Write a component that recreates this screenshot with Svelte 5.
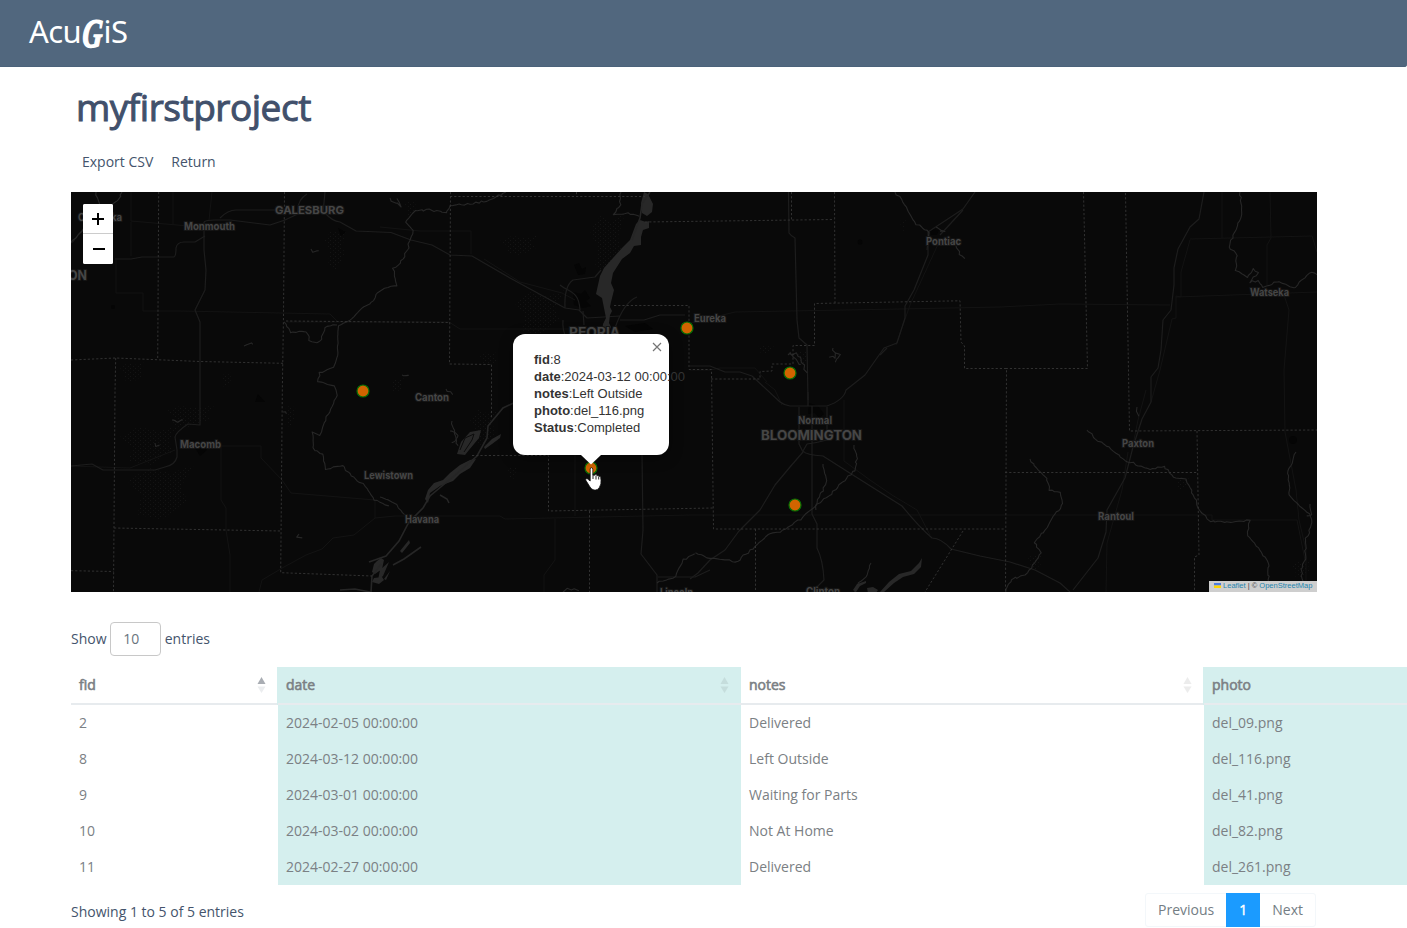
<script>
  const rows = [
    { fid: 2, date: '2024-02-05 00:00:00', notes: 'Delivered', photo: 'del_09.png' },
    { fid: 8, date: '2024-03-12 00:00:00', notes: 'Left Outside', photo: 'del_116.png' },
    { fid: 9, date: '2024-03-01 00:00:00', notes: 'Waiting for Parts', photo: 'del_41.png' },
    { fid: 10, date: '2024-03-02 00:00:00', notes: 'Not At Home', photo: 'del_82.png' },
    { fid: 11, date: '2024-02-27 00:00:00', notes: 'Delivered', photo: 'del_261.png' }
  ];
  const columns = ['fid', 'date', 'notes', 'photo'];
  const popup = [
    ['fid', '8'],
    ['date', '2024-03-12 00:00:00'],
    ['notes', 'Left Outside'],
    ['photo', 'del_116.png'],
    ['Status', 'Completed']
  ];
  const markers = [[363, 391], [687, 328], [790, 373], [795, 505], [591, 468]];

  const borders = [
    'M158.7 192L157.7 359', 'M284.5 192L283.5 316L282.3 392L280.7 572.7L372 576',
    'M71 360L115.7 358L200 361.5L283 363.3', 'M115.7 358L115 392L113.5 592', 'M114 528L281 531',
    'M71 570.7L113.5 571.5', 'M286 321L450 322.5', 'M450.5 192L449.5 364L491.5 364.5V418',
    'M450 196.5H645M576.5 192V197', 'M645 222L834 219.5', 'M614 305.5H689V369.5H711.5L713.5 529H1005',
    'M791.5 192V220M834.5 192L835 303', 'M711 379H760V371.5L772 371V364H793V345.5H814.5V303.5L960 300.8L961 342L964.5 346V368.5H1006.5L1005.5 592',
    'M472 455.5H548.5V511L713 508', 'M589.5 511V592', 'M755.5 529V592', 'M963 531L925 592',
    'M1083.5 192L1087.5 368.5H1006', 'M1125.5 193L1129.5 431L1317 430', 'M1197 431L1199 555L1194.5 557V592', 'M1005 472.5H1197'
  ];
  const roads = [
    'M71 243C76 241 78 229 90 226M115 259H131L142 257H174Q176 256 176 248Q177 242 184 242H195L205 236',
    'M204 222Q206 220 215 220H230L270 225L285 220L302 212M325 213Q332 221 340 222L356 231L391 232.5L411 240L432 245L450 255L472 256L510 278L565 308L579 310L587 318L620 316',
    'M204 222L204 250L206 270L205 290L195 310L200 322V425L188 424Q176 432 175 437L177 450V457Q175 465 165 467L155 470H103L92 464L71 466',
    'M298 212Q297 200 307 194M325 192L323 213M220 218Q228 210 236 210H285',
    'M580 310C579 290 568 292 560 285M565 308Q564 286 573 280L595 277L601 270M563 320Q562 330 567 340M583 311L584 325M620 320H644L660 315H685M615 328Q624 302 637 297',
    'M788.5 192L789 233Q791 236 795 238L797 320L799 338L807 345L808 400M690 366H710L725 372H740L752 376L780 402Q784 405 790 406H827Q844 400 846 390L865 375L884 348L897 343L905 318V306L914 290L922 270L928 255V232L963 209L975 192',
    'M929 232L927 250M880 355L887 348M940 235L963 210',
    'M799 407V444L803 452L790 467L775 485L760 510L739 531L725 550L710 560L698 573L690 579',
    'M812 406V514L817 524V548Q823 560 824 580L812 592M808 406V392M827 407V440Q816 443 807 444L803 451Q806 455 823 456L845 470L902 506Q920 528 932 538Q941 538 951 549L980 556L1010 562L1035 570L1060 583L1070 592',
    'M1204 192L1199 219L1190 227L1178 249L1174 268V285L1171 310L1163 320L1161 350L1158 368L1151 377L1151 402L1142 419L1133 447L1125 478L1107 510L1106 532L1098 558L1073 590',
    'M642 455L643 530L641 554L657 575V592M658 577H695L710 570'
  ];
  const lanes = [
    'M131 192V221L200 227M131 222V256M173 192V225M116 260V293H126L143 293V311H180L330 314L337 321M287 322H449L460 329H570',
    'M380 227L420 231H471V254M484 259L520 282L562 293L575 300M212 192L209 220',
    'M221 446V500L226 508V530L230 555V592M217 446H261V458L282 480L291 493L375 500V518L354 535L333 538L322 549L306 555L284 567L262 580L259 592',
    'M71 466L130 468L175 450M375 518L395 516H500L505 519L690 515H1212V520H1297L1305 560M555 519V560L544 575V592',
    'M1000 307L900 309L735 312L690 323M1000 307L1060 304L1170 305M575 455L575 516M844 400V461L870 480L892 495L917 510L930 535',
    'M1190 239L1312 236L1317 252M1222 192V238M1270 192L1271 238L1267 245V285M1190 240L1181 272V297L1176 296V318L1172 319L1160 370L1151 402M1176 297L1317 292M1284 295L1289 310L1284 370L1285 432L1296 490L1299 520L1306 550V592',
    'M1128 452L1122 490L1107 543L1106 592M1146 390L1138 420L1132 450M940 240L910 305L896 345M765 382L775 390L782 405M690 370H710L720 368H755L767 382'
  ];

  // Wobbles each segment so that waterways meander between their survey points.
  function meander(points, amp = 1.6) {
    let seed = points[0][0] * 13 + points[0][1];
    const rnd = () => ((seed = (seed * 16807 + 11) % 2147483647) / 2147483647) - 0.5;
    let d = `M${points[0][0]} ${points[0][1]}`;
    for (let i = 1; i < points.length; i++) {
      const [x0, y0] = points[i - 1];
      const [x1, y1] = points[i];
      const n = Math.max(1, Math.round(Math.hypot(x1 - x0, y1 - y0) / 3));
      for (let k = 1; k <= n; k++) {
        const t = k / n;
        d += `L${(x0 + (x1 - x0) * t + rnd() * amp * 2).toFixed(1)} ${(y0 + (y1 - y0) * t + rnd() * amp * 2).toFixed(1)}`;
      }
    }
    return d;
  }
  const rivers = [
    [[96, 192], [99, 205], [98, 215], [86, 226], [78, 236], [71, 243]],
    [[122, 192], [119, 199], [112, 204]],
    [[506, 192], [490, 200], [470, 204], [450, 205], [446, 213], [430, 210], [415, 211], [405, 222], [414, 230], [407, 250], [400, 264], [393, 269], [397, 285], [382, 289], [371, 302], [360, 310], [350, 320], [338, 325], [337, 355], [333, 368], [320, 373], [318, 382], [334, 386], [337, 395], [325, 420], [320, 435], [313, 432], [313, 448], [322, 455], [326, 470], [342, 465], [352, 476], [365, 486], [375, 500], [388, 505]],
    [[337, 325], [325, 328], [320, 342], [311, 342], [306, 332], [290, 332], [285, 322]],
    [[895, 192], [905, 205], [914, 222], [925, 229], [931, 238]],
    [[956, 246], [960, 254], [965, 258]],
    [[621, 192], [620, 205], [614, 214], [628, 213], [640, 217]],
    [[854, 445], [857, 456], [855, 470], [842, 482], [831, 494], [820, 502], [813, 509], [800, 519], [785, 530], [768, 535], [755, 547], [743, 556], [738, 562], [710, 558], [695, 553]],
    [[823, 464], [827, 478], [823, 490], [817, 500], [816, 509]],
    [[1030, 459], [1038, 471], [1047, 478], [1049, 490], [1060, 493], [1063, 503], [1053, 517], [1046, 530], [1034, 542], [1041, 553], [1033, 565], [1025, 575], [1012, 579], [1005, 591]],
    [[1087, 430], [1098, 441], [1112, 449], [1125, 460], [1135, 464], [1150, 470], [1164, 466], [1173, 477], [1185, 480], [1194, 495], [1200, 512], [1210, 521], [1230, 522], [1250, 520], [1247, 535], [1260, 550], [1268, 563], [1269, 580], [1264, 592]],
    [[1296, 452], [1288, 470], [1290, 495], [1302, 508], [1310, 514], [1312, 525], [1305, 540], [1306, 560], [1301, 570], [1304, 592]],
    [[1310, 504], [1312, 514], [1306, 516]],
    [[1240, 192], [1242, 215], [1235, 232], [1229, 247], [1237, 255], [1236, 270], [1247, 277], [1254, 269], [1258, 273], [1250, 282], [1259, 281], [1263, 288], [1277, 281], [1296, 288], [1302, 280], [1309, 273], [1317, 274]],
    [[380, 497], [394, 503], [404, 514]],
    [[563, 592], [568, 589], [578, 590]],
    [[657, 583], [675, 577], [684, 560], [695, 553]],
    [[871, 563], [867, 577], [858, 582], [855, 592]]
  ];
  const smallWater = [
    [[788, 355], [796, 353], [801, 360], [806, 372]], [[790, 352], [797, 362], [801, 365]],
    [[833, 348], [835, 357], [829, 357]], [[835, 353], [841, 355], [835, 362]],
    [[244, 346], [248, 344], [254, 343]], [[311, 249], [314, 252], [319, 251]], [[172, 420], [178, 421], [184, 420]],
    [[452, 421], [455, 434], [457, 446]], [[450, 431], [459, 434], [453, 444]], [[390, 198], [400, 206], [398, 199]],
    [[936, 227], [945, 231], [939, 233]], [[1137, 407], [1138, 414], [1139, 417]], [[446, 389], [451, 392], [454, 395]], [[402, 375], [408, 375], [405, 377]],
    [[155, 443], [157, 447], [159, 446]], [[283, 412], [287, 413], [286, 415]], [[299, 534], [298, 537], [301, 538]]
  ];
  const stipple = [
    [120, 425, 60, 40], [128, 465, 66, 55], [165, 405, 50, 22], [120, 362, 26, 20], [284, 405, 12, 22], [325, 228, 22, 42], [590, 213, 35, 60],
    [500, 235, 40, 20], [515, 290, 50, 45], [405, 200, 12, 16], [470, 408, 28, 38], [480, 352, 18, 14], [390, 378, 14, 14], [757, 345, 18, 8], [798, 350, 10, 16],
    [1175, 478, 14, 12], [1292, 560, 20, 18], [900, 218, 6, 14], [508, 466, 9, 14], [1028, 554, 14, 16], [222, 372, 10, 16]
  ];
  const labels = [
    ['Monmouth', 184, 230, 51, 10.5], ['GALESBURG', 275, 214, 69, 11], ['PEORIA', 569, 336.5, 51, 12.5], ['Eureka', 694, 322, 32, 9.8],
    ['Pontiac', 926, 245, 35, 10], ['Watseka', 1250, 296, 39, 10], ['Canton', 415, 401, 34, 10], ['Macomb', 180, 448, 41, 10.5],
    ['Lewistown', 364, 479, 49, 10], ['Havana', 405, 523, 34, 10], ['Normal', 798, 424, 34, 10], ['BLOOMINGTON', 761, 439.5, 101, 12.8],
    ['Paxton', 1122, 447, 32, 10], ['Rantoul', 1098, 520, 36, 10], ['Clinton', 806, 595, 34, 10], ['Lincoln', 660, 596, 33, 10],
    ['Oquawka', 78, 221, 44, 10], ['ON', 68, 280, 19, 13]
  ];
</script>

<div class="page">
  <header class="navbar">
    <div class="logo"><span>Acu</span><span class="script">G</span><span>iS</span></div>
  </header>

  <main>
    <h1>myfirstproject</h1>
    <nav class="actions"><a href="#export">Export CSV</a><a href="#return">Return</a></nav>

    <section class="map">
      <svg class="tiles" viewBox="71 192 1246 400" width="1246" height="400">
        <defs>
          <pattern id="dots" width="5" height="4" patternUnits="userSpaceOnUse">
            <rect x="0" y="0" width="1" height="1" fill="#141414" /><rect x="3" y="2" width="1" height="1" fill="#121212" />
          </pattern>
        </defs>
        <rect x="71" y="192" width="1246" height="400" fill="#090909" />
        {#each stipple as [x, y, w, h]}
          <path d={`M${x} ${y + h * 0.3}l${w * 0.3} ${-h * 0.25}l${w * 0.35} ${h * 0.1}l${w * 0.35} ${-h * 0.15}l${-w * 0.2} ${h * 0.4}l${w * 0.1} ${h * 0.25}l${-w * 0.4} ${h * 0.35}l${-w * 0.35} ${-h * 0.1}l${w * 0.05} ${-h * 0.35}z`} fill="url(#dots)" />
        {/each}
        <g fill="#050505">
          <path d="M574 265l5-2 3 6 4-2-1 7-7 1zM573 292l8 2 4-4 5 8-4 3 5 5-8 2-9-3zM809 403l9 3 6 8-5 4-4-5-7 1zM190 440l20 3-4 8-6 5zM338 228l8 4-5 4zM258 394l7 8-10 0zM625 326l20-3 8 6-18 3zM930 229l9 1-2 5-6 0z" />
          <circle cx="860" cy="242" r="2.5" /><circle cx="1293" cy="440" r="4" /><circle cx="113" cy="307" r="2" />
        </g>
        <g fill="none" stroke="#131313" stroke-width="1">
          {#each lanes as d}<path {d} />{/each}
        </g>
        <g fill="none" stroke="#1d1d1d" stroke-width="1.2" stroke-linejoin="round">
          {#each roads as d}<path {d} />{/each}
        </g>
        <g fill="none" stroke="#272727" stroke-width="1.1" stroke-linejoin="round">
          {#each rivers as r}<path d={meander(r, 1)} />{/each}
          {#each smallWater as r}<path d={meander(r, 1.4)} />{/each}
        </g>
        <g fill="#282828">
          <path d="M644 192l4 2 5 10-1 8-5 4-5-3-1-10zM640 220l6 2 3-1v7l-6 2-2 7 0 8-7 1-4 7-8 6-9 14-2 10 3 7-3 12-1 5 2 4-2 4-1 8 2 4-3 6-6-1 1-8 3-6-4-20-6-4 4-18 4-8 18-20 8-8 6-16z" />
          <path d="M470 432l11-2-2 8-10 12-4 5-8-1 4-12zM484 447l8-8 9-5-1 4-8 6-7 5z" />
          <path d="M476 459l-6 9-10 6-7 7-13 5-10 7-2 10-3-4 3-9 6-7 9-3 7-7 10-8 10-5z" />
          <path d="M409 540l1 3-8 10-2-2zM377 561l4-3 3 2-2 9-7 5-3-2 2-8zM389 562l-6 14-5 4 2-10zM374 578l8-1 2 3-5 4-7-2zM390 571l-4 9-2-1z" />
          <path d="M922 558l-3 5-8 8-12 3-10 8-9 10h4l10-9 9-6 11-3 7-7zM867 588l6-1 5 3-2 3h-8zM853 590l4-6 9-3v2l-6 3-4 6z" />
        </g>
        <g fill="none" stroke="#262626" stroke-width="1.6">
          <path d="M650 192l-8 12-2 14-8 22M518 401l-15 7-15 18-1 12-10 18-23 20-24 20-7 12-14 14-10 19-13 15-17 6M421 547l-17 12-11 6M340 590l15-1 15 3M440 495l7 4 2 4M371 592l1-16 9-12" />
        </g>
        <path d="M460 450l5-12 9-4M464 452l8-12 2-6" fill="none" stroke="#0c0c0c" />
        <g fill="none" stroke="#313131" stroke-width="1" stroke-dasharray="2.2 2">
          {#each borders as d}<path {d} />{/each}
        </g>
        <g class="places">
          {#each labels as [name, x, y, w, size]}
            <text {x} {y} textLength={w} lengthAdjust="spacingAndGlyphs" font-size={size}>{name}</text>
          {/each}
        </g>
        {#each markers as [cx, cy]}
          <circle {cx} {cy} r="6" fill="#d16400" stroke="#087005" stroke-width="1.2" />
        {/each}
      </svg>

      <div class="zoom"><button aria-label="Zoom in"><svg width="30" height="29"><path d="M9 15h12M15 9v12" /></svg></button><button aria-label="Zoom out"><svg width="30" height="30"><path d="M10 15h12" /></svg></button></div>

      <div class="popup">
        {#each popup as [key, value]}
          <div><b>{key}</b>:{value}</div>
        {/each}
        <svg class="close" width="10" height="10"><path d="M1 1l8 8M9 1l-8 8" /></svg>
        <svg class="tip" width="20" height="10"><path d="M0 0h20l-10 9.5z" /></svg>
      </div>

      <svg class="cursor" width="18" height="24" viewBox="0 0 18 24">
        <path d="M5.2 2.2Q5.2.7 6.4.7T7.8 2.2V8l1.8.3Q10 7 11 7.3q1 .2 1.1 1.5 1-.7 2 .5 1.200-.4 1.600 1.100.6 2.600.2 6.500l-1.500 3.500Q13 23 10.500 23H9Q6.500 22.600 5 20L1 13.600q-.9-1.500.3-1.800 1.400-.3 2.600 1.200l1.300 1z" />
        <path class="fingers" d="M8 8v4M11 8.500v4M13.700 9.500v3" />
      </svg>

      <div class="credit">
        <svg width="7" height="5"><rect width="7" height="2.500" fill="#4c7be1" /><rect y="2.500" width="7" height="2.500" fill="#ffd500" /></svg>
        <a href="#leaflet">Leaflet</a> | © <a href="#osm">OpenStreetMap</a>
      </div>
    </section>

    <div class="length">Show <span class="select">10</span> entries</div>

    <table>
      <colgroup><col class="narrow" /><col /><col /><col /></colgroup>
      <thead>
        <tr>
          {#each columns as column, i}
            <th>
              <div class="head"><span>{column}</span>
                <svg class:asc={i === 0} width="9" height="16"><path class="up" d="M.5 7L4.500 0l4 7z" /><path d="M.5 9.500h8l-4 6.500z" /></svg>
              </div>
            </th>
          {/each}
        </tr>
      </thead>
      <tbody>
        {#each rows as row}
          <tr>{#each columns as column}<td>{row[column]}</td>{/each}</tr>
        {/each}
      </tbody>
    </table>

    <footer>
      <span>Showing 1 to 5 of 5 entries</span>
      <div class="pager"><span>Previous</span><span class="current">1</span><span>Next</span></div>
    </footer>
  </main>
</div>

<style>
  :global(body) { background: #fff; }
  .page {
    width: 1407px; height: 928px; overflow: hidden; box-sizing: border-box;
    font: 14px/20px "Open Sans", "Noto Sans", sans-serif; color: #44546c;
  }
  a { color: inherit; text-decoration: none; }
  .navbar { height: 67px; background: #51677e; border-radius: 0 0 3px 0; box-shadow: inset 0 -1px #4b627a; padding-left: 29px; box-sizing: border-box; }
  .logo { display: flex; align-items: baseline; color: #fff; font: 31px/62px "Noto Sans", "Open Sans", sans-serif; width: 98px; }
  .logo span { letter-spacing: -0.6px; }
  .logo .script { font: italic 700 32px/30px "Liberation Serif", serif; width: 21.5px; margin-left: 1px; letter-spacing: 0; transform: translateY(4px) scale(0.86, 1.26) skewX(-6deg); transform-origin: 0 82%; -webkit-text-stroke: 1.3px #fff; }
  main { padding: 0 91px 0 71px; }
  h1 { margin: 0; padding: 18px 0 0 5px; font-size: 37px; line-height: 43px; font-weight: 400; color: #41506b; letter-spacing: -0.48px; -webkit-text-stroke: 1px #41506b; }
  .actions { display: flex; gap: 18px; padding: 24px 0 0 11px; height: 40px; }
  .map { position: relative; width: 1246px; height: 400px; overflow: hidden; background: #090909; }
  .tiles { display: block; }
  .places text { font-family: Inter, "Open Sans", sans-serif; font-weight: 700; fill: #464646; stroke: #151515; stroke-width: 2px; paint-order: stroke; }
  .zoom { position: absolute; left: 12px; top: 12px; width: 30px; height: 60px; border-radius: 2px; overflow: hidden; display: flex; flex-direction: column; background: #fff; }
  .zoom button { border: 0; padding: 0; margin: 0; background: #fff; height: 30px; flex: none; box-sizing: border-box; }
  .zoom button:first-child { border-bottom: 1px solid #ccc; }
  .zoom svg { display: block; }
  .zoom path { stroke: #000; stroke-width: 2; }
  .popup { position: absolute; left: 442px; top: 142px; width: 156px; height: 121px; box-sizing: border-box; padding: 17px 0 0 21px; background: #fff; border-radius: 12px; white-space: nowrap; color: #333; font: 13px/17px "Liberation Sans", Arial, sans-serif; box-shadow: 0 3px 14px rgba(0, 0, 0, 0.4); }
  .close { position: absolute; right: 7px; top: 7.5px; fill: none; stroke: #757575; stroke-width: 1.2; }
  .tip { position: absolute; left: 68px; top: 120.5px; fill: #fff; }
  .cursor { position: absolute; left: 514px; top: 275px; fill: #fff; stroke: #111; stroke-width: 0.8; }
  .fingers { fill: none; stroke: #111; stroke-width: 0.9; }
  .credit { position: absolute; right: 0; bottom: 0; width: 108px; height: 11px; box-sizing: border-box; padding-left: 5px; white-space: nowrap; background: #cecece; color: #444; font: 7.5px/10px "Liberation Sans", Arial, sans-serif; letter-spacing: 0; }
  .credit a { color: #1f86af; }
  .length { display: flex; align-items: center; gap: 4px; height: 34px; margin-top: 30px; }
  .select { width: 51px; height: 34px; box-sizing: border-box; border: 1px solid #c8c8c8; border-radius: 4px; padding: 6px 0 0 12.5px; margin-left: -0.8px; color: #6a747d; }
  table { width: 1596px; margin-top: 11px; table-layout: fixed; border-collapse: separate; border-spacing: 0; color: #7b8084; }
  .narrow { width: 207px; }
  th, td { padding: 0 8px; text-align: left; font-weight: 400; box-sizing: border-box; }
  th { height: 38px; border-bottom: 2px solid #e7ebee; -webkit-text-stroke: 0.6px #7b8084; }
  td { height: 36px; }
  th:nth-child(even), td:nth-child(even) { background: #d5efee; background-clip: padding-box; }
  th:nth-child(even) { box-shadow: -1px 0 #d5efee; }
  .head { display: flex; justify-content: space-between; align-items: center; }
  .head svg { margin-right: 4px; fill: #000; opacity: 0.07; stroke: none; }
  .head svg.asc { opacity: 1; fill: #ebedef; }
  .asc .up { fill: #a9adb3; }
  footer { display: flex; justify-content: space-between; padding-top: 8px; }
  footer > span { padding-top: 9px; }
  .pager { display: flex; height: 34px; box-sizing: border-box; border: 1px solid #f3f7fa; border-radius: 3px; color: #747d84; }
  .pager span { padding: 6px 12px; line-height: 20px; }
  .pager .current { margin: -1px 0; padding: 7px 13px; background: #1b9bff; color: #fff; -webkit-text-stroke: 0.4px #fff; }
</style>
